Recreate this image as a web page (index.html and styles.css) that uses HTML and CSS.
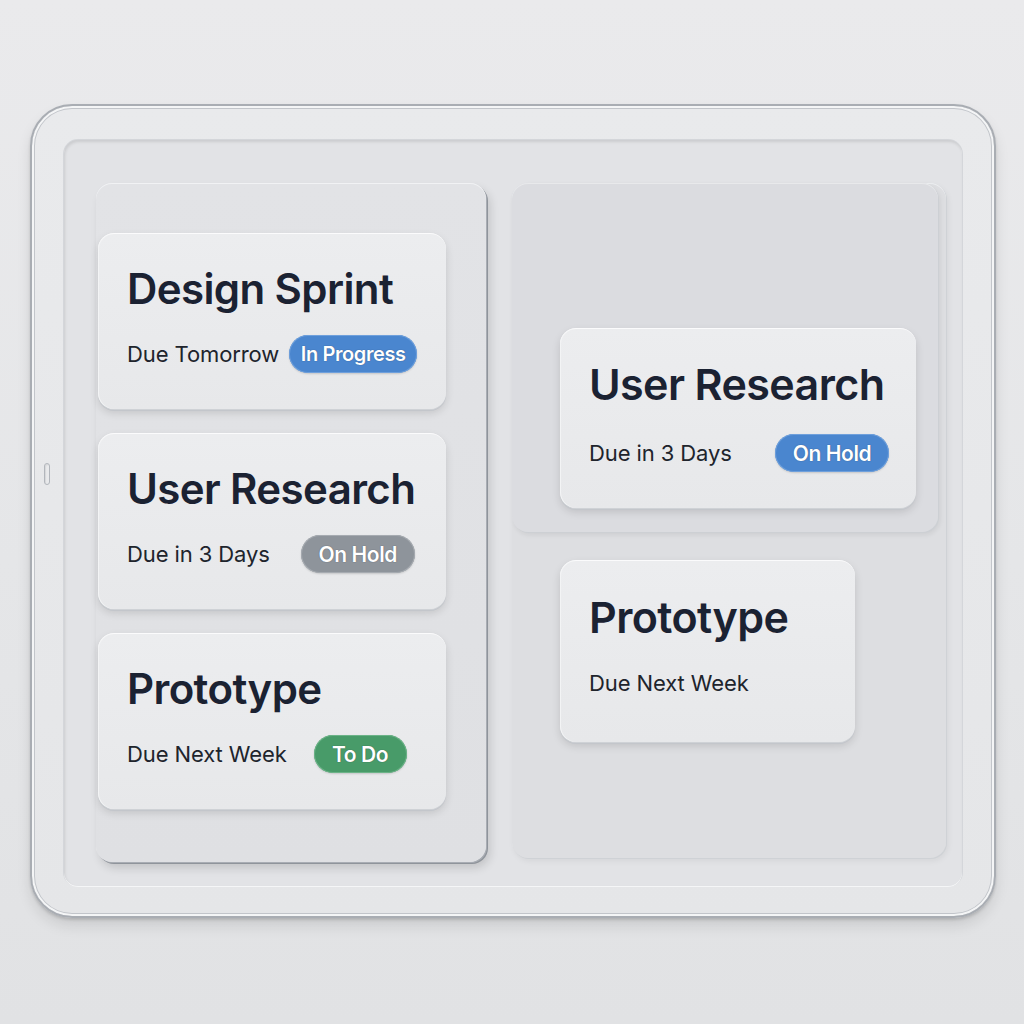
FILE: index.html
```html
<!DOCTYPE html>
<html lang="en">
<head>
<meta charset="utf-8">
<title>Tasks</title>
<link rel="stylesheet" href="styles.css">
</head>
<body>
<div class="device">
  <span class="slot"></span>
  <div class="screen">
    <section class="col col-left">
      <article class="card">
        <h2 class="title">Design Sprint</h2>
        <div class="meta">
          <span class="due">Due Tomorrow</span>
          <span class="pill pill-blue w-progress gap-s">In Progress</span>
        </div>
      </article>
      <article class="card">
        <h2 class="title">User Research</h2>
        <div class="meta">
          <span class="due">Due in 3 Days</span>
          <span class="pill pill-grey w-hold gap-l">On Hold</span>
        </div>
      </article>
      <article class="card">
        <h2 class="title">Prototype</h2>
        <div class="meta">
          <span class="due">Due Next Week</span>
          <span class="pill pill-green w-todo gap-m">To Do</span>
        </div>
      </article>
    </section>
    <section class="col col-right">
      <div class="layer">
        <article class="card card-wide">
          <h2 class="title title-lg">User Research</h2>
          <div class="meta meta-lg">
            <span class="due">Due in 3 Days</span>
            <span class="pill pill-blue w-hold push">On Hold</span>
          </div>
        </article>
      </div>
      <article class="card card-small">
        <h2 class="title title-lg">Prototype</h2>
        <div class="meta meta-text">
          <span class="due">Due Next Week</span>
        </div>
      </article>
    </section>
  </div>
</div>
</body>
</html>
```

FILE: styles.css
```css
* { box-sizing: border-box; }

html, body {
  margin: 0;
  padding: 0;
}

body {
  width: 1024px;
  height: 1024px;
  background: linear-gradient(180deg, #eaeaec 0%, #e5e6e8 55%, #e1e2e4 100%);
  font-family: Inter, "Noto Sans", "Liberation Sans", sans-serif;
  padding-top: 104px;
  padding-left: 30px;
}

.device {
  position: relative;
  width: 966px;
  height: 814px;
  border-radius: 42px;
  background: linear-gradient(180deg, #e9eaec 0%, #e5e6e8 100%);
  border: 2px solid #a9adb3;
  box-shadow:
    inset 0 0 0 2px #f4f5f6,
    inset 0 0 0 3px #c2c5ca,
    0 8px 14px rgba(0, 0, 0, 0.10),
    0 2px 3px rgba(0, 0, 0, 0.14);
  padding: 34px 32px 30px 32px;
}

.slot {
  position: absolute;
  left: 12px;
  top: 357px;
  width: 6px;
  height: 22px;
  border-radius: 3px;
  border: 1px solid #b2b6bc;
  background: #e9eaec;
  box-shadow: inset 1px 1px 1px rgba(0,0,0,0.08);
}

.screen {
  width: 898px;
  height: 746px;
  border-radius: 14px;
  background: #e2e3e6;
  box-shadow:
    inset 1px 2px 3px rgba(0, 0, 0, 0.10),
    0 1px 0 #f5f6f7,
    0 0 0 1px #d4d6da;
  padding: 43px 16px 24px 32px;
  display: flex;
  gap: 26px;
  align-items: flex-start;
}

.col {
  border-radius: 16px;
  display: flex;
  flex-direction: column;
}

.col-left {
  width: 390px;
  height: 679px;
  background: linear-gradient(180deg, #e2e3e6 0%, #dfe0e3 100%);
  box-shadow:
    inset 0 1px 0 #f1f2f4,
    1px 1px 0 #a9adb4,
    2px 2px 0 #8f949b,
    4px 6px 10px rgba(0, 0, 0, 0.14);
  padding: 50px 0 0 2px;
  gap: 24px;
}

.col-right {
  width: 434px;
  height: 675px;
  background: #dddee1;
  box-shadow:
    inset 0 1px 0 #eceef0,
    1px 1px 0 #cfd2d6,
    2px 3px 6px rgba(0, 0, 0, 0.06);
}

.layer {
  width: 426px;
  height: 349px;
  border-radius: 16px;
  background: #dbdce0;
  box-shadow:
    inset 0 1px 0 #e8e9eb,
    1px 1px 0 #cdd0d4,
    2px 3px 5px rgba(0, 0, 0, 0.07);
  padding: 145px 0 0 48px;
}

.card {
  width: 348px;
  height: 176px;
  border-radius: 16px;
  background: linear-gradient(180deg, #ecedef 0%, #e7e8ea 100%);
  border-top: 1px solid #fbfbfc;
  box-shadow:
    inset 1px 0 0 #f3f4f5,
    0 1px 0 #cfd2d6,
    0 2px 0 #c3c6cb,
    0 4px 8px rgba(0, 0, 0, 0.13);
  padding: 34px 0 0 29px;
  flex: none;
}

.card-wide {
  width: 356px;
  height: 180px;
  padding-top: 34px;
}

.card-small {
  width: 295px;
  height: 182px;
  margin: 28px 0 0 48px;
  padding-top: 35px;
}

.title {
  margin: 0;
  font-size: 42px;
  line-height: 41px;
  font-weight: 600;
  letter-spacing: -0.6px;
  color: #1b2232;
}

.title-lg {
  font-size: 43px;
  line-height: 42px;
}

.meta {
  display: flex;
  align-items: center;
  height: 38px;
  margin-top: 26px;
}

.meta-lg {
  margin-top: 29px;
  padding-right: 27px;
}

.meta-text {
  margin-top: 30px;
  height: 30px;
}

.due {
  font-size: 22px;
  font-weight: 400;
  color: #20242c;
  letter-spacing: -0.1px;
}

.pill {
  height: 38px;
  border-radius: 19px;
  display: inline-flex;
  align-items: center;
  justify-content: center;
  color: #ffffff;
  font-size: 21px;
  font-weight: 600;
  letter-spacing: -0.4px;
  text-shadow: 0 0 1px rgba(20, 30, 50, 0.6);
  flex: none;
}

.w-progress { width: 128px; font-size: 20px; }
.w-hold { width: 114px; }
.w-todo { width: 93px; }

.pill-blue {
  background: #4a86cf;
  box-shadow: inset 0 0 0 1px #6fa0dc, 0 1px 2px rgba(0, 0, 0, 0.15);
}

.pill-grey {
  background: #8e949b;
  box-shadow: inset 0 0 0 1px #a6abb1, 0 1px 2px rgba(0, 0, 0, 0.15);
}

.pill-green {
  background: #489b69;
  box-shadow: inset 0 0 0 1px #6cb388, 0 1px 2px rgba(0, 0, 0, 0.15);
}

.gap-s { margin-left: 10px; }
.gap-m { margin-left: 27px; }
.gap-l { margin-left: 31px; }
.push { margin-left: auto; }
```
